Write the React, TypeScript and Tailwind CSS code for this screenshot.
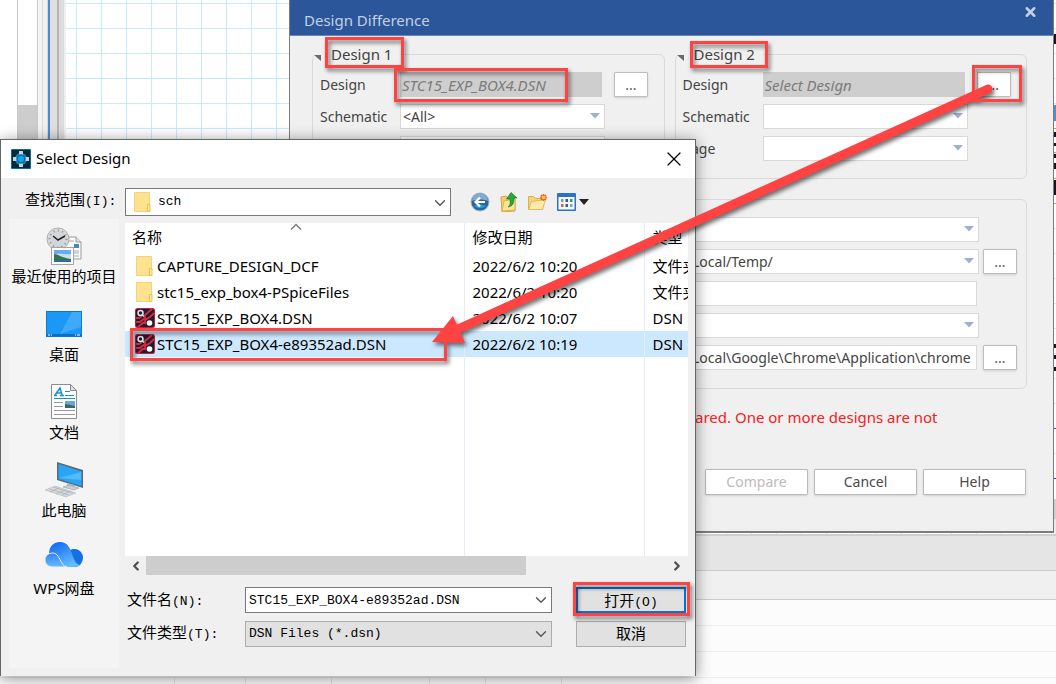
import { useState } from 'react';
import type { ReactNode } from 'react';
import clsx from 'clsx';
import { ChevronDown, ChevronLeft, ChevronRight, X } from 'lucide-react';

const UI_FONT = "font-['Noto_Sans','Noto_Sans_CJK_SC',sans-serif]";
const MONO_FONT = "font-['Liberation_Mono','Noto_Sans_CJK_SC',monospace]";

interface FileEntry {
  name: string;
  date: string;
  type: string;
  kind: 'folder' | 'design';
}

const FILES: FileEntry[] = [
  { name: 'CAPTURE_DESIGN_DCF', date: '2022/6/2 10:20', type: '文件夹', kind: 'folder' },
  { name: 'stc15_exp_box4-PSpiceFiles', date: '2022/6/2 10:20', type: '文件夹', kind: 'folder' },
  { name: 'STC15_EXP_BOX4.DSN', date: '2022/6/2 10:07', type: 'DSN', kind: 'design' },
  { name: 'STC15_EXP_BOX4-e89352ad.DSN', date: '2022/6/2 10:19', type: 'DSN', kind: 'design' },
];

/* ---------- icons ---------- */

const AppIcon = () => (
  <svg className="w-5 h-5" viewBox="0 0 20 20">
    <rect width="20" height="20" rx="1" fill="#0a6d94" />
    <rect x="1" y="1" width="18" height="18" fill="#04293b" />
    <circle cx="10" cy="10" r="6" fill="#0f8cc4" />
    <path d="M8 2h4v3.500H8zM8 14.500h4V18H8zM2 8h3.500v4H2zM14.500 8H18v4h-3.500z" fill="#c9d4da" />
    <circle cx="10" cy="10" r="4.500" fill="#0a6fa6" />
    <circle cx="10" cy="10" r="3" fill="#12a5e8" />
  </svg>
);

const FolderIcon = () => (
  <svg className="w-5 h-5" viewBox="0 0 20 20">
    <path d="M1.500.5h15v19h-15z" fill="#ffe28f" stroke="#f3d377" />
    <path d="M14.500 12.500h2.500v7h-2.500z" fill="#ffe9a8" stroke="#e9c04d" />
  </svg>
);

const DesignIcon = () => (
  <svg className="w-5 h-5" viewBox="0 0 20 20">
    <rect width="20" height="20" rx="2.500" fill="#c41f3a" />
    <rect x="1" y="1" width="18" height="18" rx="2" fill="#1c1f2e" />
    <path d="M1 14h4l5-4V7l7-6M3 19l5-4h2v-3l5-3 4-4M1 10h3l3-2" fill="none" stroke="#dc2742" strokeWidth="1.800" />
    <circle cx="5.500" cy="5" r="2.500" fill="#1c1f2e" stroke="#e4e6ea" strokeWidth="1.500" />
    <path d="M7 6.500l2 2" stroke="#e4e6ea" strokeWidth="1.200" />
    <circle cx="14.500" cy="15" r="2.800" fill="#fff" />
  </svg>
);

const RecentIcon = () => (
  <svg className="w-9 h-[38px]" viewBox="0 0 36 38">
    <path d="M18 10h12l5 5v17H18z" fill="#fbfbfb" stroke="#9a9a9a" />
    <path d="M30 10v5h5" fill="#e5e5e5" stroke="#9a9a9a" />
    <path d="M21 14h7M21 21h6M28 26h5M28 29h5M28 24h5" stroke="#a9a9a9" />
    <path d="M28 17h5v4h-5z" fill="#4389b5" />
    <circle cx="12" cy="12" r="11" fill="#d7d9da" stroke="#aeb1b3" />
    <circle cx="12" cy="12" r="8.500" fill="#d3d6d8" stroke="#8b8e90" strokeDasharray="1 3.400" strokeWidth="2" />
    <path d="M7 9l5 4 7-4" fill="none" stroke="#222" strokeWidth="1.500" />
    <rect x="5.500" y="20.500" width="22" height="17" fill="#fff" stroke="#a5a5a5" />
    <rect x="8" y="23" width="17" height="12" fill="#6fa9ea" />
    <path d="M8 28c5-3 10 0 17-1v5H8z" fill="#c6dff3" />
    <path d="M8 27c4 0 8 4 17 5v3H8z" fill="#39734e" />
    <path d="M8 33h17v2H8z" fill="#2a6e9c" />
  </svg>
);

const DesktopIcon = () => (
  <svg className="w-9 h-[38px]" viewBox="0 0 36 38">
    <rect x=".5" y="6.500" width="35" height="25" fill="#1b98f5" stroke="#1077c9" />
    <path d="M35 7v15L14 29 26 7z" fill="#3faaf9" />
    <path d="M1 29h34v2H1z" fill="#0d6fc0" />
    <path d="M2 30h2M5 30h1M29 30h1M31 30h3" stroke="#fff" />
  </svg>
);

const DocumentsIcon = () => (
  <svg className="w-9 h-[38px]" viewBox="0 0 36 38">
    <path d="M5.500 1.500h19l6 6v28h-25z" fill="#fdfdfd" stroke="#8d8d8d" />
    <path d="M24.500 1.500v6h6z" fill="#dedede" stroke="#8d8d8d" />
    <path d="M9 12L14 5l2 7M11 10h5M8 12.500h3M14 12.500h4" fill="none" stroke="#1c8fd1" strokeWidth="1.500" />
    <path d="M19 8.500h5M19 12.500h9M8 15.500h21" stroke="#1c8fd1" />
    <path d="M8 19.500h9M8 23.500h9M8 27.500h21M8 31.500h21" stroke="#9b9b9b" />
    <path d="M19 18h10v7H19z" fill="#6aa6d8" />
    <path d="M19 21l10 2v2H19z" fill="#336a5c" />
  </svg>
);

const ComputerIcon = () => (
  <svg className="w-[38px] h-[38px]" viewBox="0 0 38 38">
    <path d="M12 1l26 8v18l-26-8z" fill="#5a6b78" />
    <path d="M13.500 3l23 7.500v14.500l-23-7z" fill="#27a5f6" />
    <path d="M36 11v8l-22-2z" fill="#55b9fa" />
    <path d="M22 22l7 2v3l-7-2z" fill="#b4bcc2" />
    <path d="M18 26l6-2 10 3-5 2z" fill="#c7cdd2" stroke="#98a1a8" strokeWidth=".6" />
    <path d="M0 29l10-4 21 7-10 4z" fill="#d5d9dc" stroke="#b3babf" strokeWidth=".6" />
    <path d="M4 28l20 6M8 26l20 6M5 31l9-4M11 33l9-4M17 34l9-4" stroke="#adb4b9" strokeWidth=".8" />
  </svg>
);

const CloudIcon = () => (
  <svg className="w-[38px] h-[38px]" viewBox="0 0 38 38">
    <defs>
      <linearGradient id="cloudMain" x1="0" y1="0" x2="0.600" y2="1">
        <stop offset="0" stopColor="#0b62f2" />
        <stop offset="1" stopColor="#63bdff" />
      </linearGradient>
      <linearGradient id="cloudLeft" x1="0" y1="0" x2="0" y2="1">
        <stop offset="0" stopColor="#2a83f8" />
        <stop offset="1" stopColor="#6cbcff" />
      </linearGradient>
    </defs>
    <path d="M24 12c4-4 13-2 14 6 0 6-4 10-8 10h-8z" fill="#1670e4" />
    <path d="M4 15C4 7 9 3 15 3c7 0 10 5 12 12 2 6 4 10 8 11-2 1-3 2-6 2H18L8 15z" fill="url(#cloudMain)" />
    <path d="M8 28c-5 0-8-3-8-7s3-7 8-7c7 0 7 13 14 14z" fill="url(#cloudLeft)" stroke="#e6f1ff" />
  </svg>
);

const BackIcon = () => (
  <svg className="w-5 h-5" viewBox="0 0 20 20">
    <circle cx="10" cy="10" r="9" fill="#2d6499" stroke="#9ab7cf" />
    <path d="M2 9a8 8 0 0 1 16 0c-5-2-11-2-16 0z" fill="#84a9ca" />
    <path d="M4 14a8 6 0 0 0 12 0c-4-2-8-2-12 0z" fill="#27a3d4" />
    <path d="M10 5.500L5.500 10l4.500 4.500M6 10h9" fill="none" stroke="#fff" strokeWidth="2.200" />
  </svg>
);

const UpIcon = () => (
  <svg className="w-5 h-5" viewBox="0 0 20 20">
    <path d="M2 5l5-1 2 2 7 1v12l-13 1z" fill="#f3cf6a" stroke="#d3a73c" />
    <path d="M5 9l11-2v11L3 19z" fill="#fbe39a" stroke="#ddb54e" />
    <path d="M9 15c3-2 2-5 2-8H7.500L12 .5 18 6h-3c0 5-1 8-6 9z" fill="#2da53a" stroke="#14802a" strokeWidth=".7" />
  </svg>
);

const NewFolderIcon = () => (
  <svg className="w-5 h-5" viewBox="0 0 20 20">
    <path d="M.5 4.500h5l2 2h7v11H.5z" fill="#f5d57a" stroke="#dcae44" />
    <path d="M3.500 9.500l14-2-3 10H.5z" fill="#fce9ae" stroke="#e3b954" />
    <path d="M15.500 2v7M12 5.500h7M13 3l5 5M18 3l-5 5" stroke="#ee5a24" strokeWidth="1.500" />
    <circle cx="15.500" cy="5.500" r="1.800" fill="#ffd24a" />
  </svg>
);

const ViewIcon = () => (
  <svg className="w-5 h-5" viewBox="0 0 20 20">
    <rect x="0" y="1" width="19" height="18" rx="1" fill="#2a72c8" />
    <rect x="1.500" y="5" width="16" height="12.500" fill="#f5f9ff" />
    <path d="M4 7h2.500v3H4zM13 12h2.500v3H13z" fill="#8898bd" />
    <path d="M8.500 7H11v3H8.500zM8.500 12H11v3H8.500z" fill="#2d5fa8" />
    <path d="M13 7h2.500v3H13z" fill="#33a04a" />
    <path d="M4 12h2.500v3H4z" fill="#d7603e" />
  </svg>
);

/* ---------- background application ---------- */

const CanvasEdge = () => (
  <svg className="ml-auto w-0.5 h-[534px]" viewBox="0 0 2 534">
    <path d="M0 34h2v10H0zM0 132h2v5H0zM0 143h2v3H0zM0 154h2v4H0zM0 163h2v6H0zM0 180h2v15H0zM0 344h2v4H0zM0 355h2v4H0zM0 367h2v4H0z" fill="#15151f" />
    <path d="M0 105h2v16H0z" fill="#3f95dd" />
    <path d="M0 128h2v1H0zM0 152h2v1H0zM0 178h2v1H0zM0 203h2v1H0z" fill="#c9a064" />
    <path d="M0 428h2v1H0zM0 478h2v1H0z" fill="#5a2be0" />
    <path d="M0 499h2v20H0z" fill="#cfcfcf" />
    <path d="M0 519h2v15H0z" fill="#e9e9e9" />
  </svg>
);

const Workspace = () => (
  <div className="flex flex-col min-h-screen bg-[#fcfcfc]">
    <div className="flex h-[534px]">
      <div className="w-[17px] bg-white" />
      <div className="flex flex-col w-[21px] border-x border-[#c9c9c9] bg-[#cdcdcd]">
        <div className="h-[105px] bg-white" />
      </div>
      <div className="w-1 bg-[#f4f4f4]" />
      <div className="w-1.5 border-x border-[#d8d8d8] bg-[#f1f1f1]" />
      <div className="w-0.5 bg-[#4b8ad0]" />
      <div className="w-[7px] bg-[#dedede]" />
      <div className="w-0.5 bg-[#b3b3b3]" />
      <div className="w-[7px] border-r-2 border-[#efefef] bg-[#dcdcdc]" />
      <div className="flex flex-1 bg-white bg-[linear-gradient(to_right,#c8eafe_1px,transparent_1px),linear-gradient(to_bottom,#c8eafe_1px,transparent_1px)] bg-size-[25px_25px] bg-position-[10px_3px]">
        <CanvasEdge />
      </div>
    </div>
    <div className="h-0.5 bg-[#cfcfcf]" />
    <div className="h-[35px] border-b border-[#cccccc] bg-[#e5e5e5]" />
    <div className="h-[29px] border-b border-[#cccccc] bg-[#f0f0f0]" />
    <div className="h-[26px] border-b border-[#eeeeee]" />
    <div className="h-[26px] border-b border-[#eeeeee]" />
    <div className="h-[26px] border-b border-[#eeeeee]" />
    <div className="flex flex-1 *:border-r *:border-[#e4e4e4]">
      <div className="w-[175px]" />
      <div className="w-[71px]" />
      <div className="w-[86px]" />
      <div className="w-[98px]" />
      <div className="w-14" />
      <div className="w-[76px]" />
    </div>
  </div>
);

/* ---------- Design Difference window ---------- */

const Caret = () => (
  <svg className="absolute right-1 top-2 w-3 h-2 pointer-events-none" viewBox="0 0 12 8">
    <path d="M1 1h10L6 6.500z" fill="#9cb1d3" />
  </svg>
);

const Combo = ({ label, value, className }: { label: string; value?: string; className?: string }) => (
  <div className={clsx('relative h-[25px]', className)}>
    <select
      aria-label={label}
      className="block w-full h-full appearance-none border border-[#d9d9d9] bg-white pl-0.5 text-sm text-[#444]"
    >
      <option>{value ?? ''}</option>
    </select>
    <Caret />
  </div>
);

const BrowseButton = ({ label }: { label: string }) => (
  <button
    type="button"
    aria-label={label}
    className="block w-[34px] h-[25px] rounded-[1px] border border-[#bdbdbd] bg-white text-sm leading-5 text-[#555] shadow-sm"
  >
    ...
  </button>
);

interface DesignGroupProps {
  title: string;
  design: string;
  schematic?: string;
}

const DesignGroup = ({ title, design, schematic }: DesignGroupProps) => (
  <fieldset className="flex-1 h-[135px] rounded-md border border-[#d9d9d9] pl-[7px]">
    <legend className="-ml-1.5 flex items-center pr-2 h-5 text-[15px] text-[#444]">
      <svg className="w-2 h-2 mt-2" viewBox="0 0 8 8">
        <path d="M0 1h7v6z" fill="#6a6a6a" />
      </svg>
      <span className="pl-[9px]">{title}</span>
    </legend>
    <div className="flex flex-col gap-[7px] pt-2 text-sm text-[#444]">
      <div className="flex items-center">
        <span className="w-20">Design</span>
        <input
          readOnly
          aria-label={`${title} file`}
          defaultValue={design}
          className="w-[202px] h-[25px] mr-3 bg-[#cecece] px-0.5 text-[15px] italic text-[#7b7b7b]"
        />
        <BrowseButton label={`Browse ${title}`} />
      </div>
      <div className="flex items-center">
        <span className="w-20">Schematic</span>
        <Combo className="w-[205px]" label={`${title} schematic`} value={schematic} />
      </div>
      <div className="flex items-center">
        <span className="w-20">Page</span>
        <Combo className="w-[205px]" label={`${title} page`} />
      </div>
    </div>
  </fieldset>
);

const DialogButton = ({ children, disabled }: { children: ReactNode; disabled?: boolean }) => (
  <button
    type="button"
    disabled={disabled}
    className="w-[103px] h-[26px] rounded-[1px] border border-[#bababa] bg-white text-sm text-[#4a4a4a] shadow-sm disabled:text-[#c0b9bb]"
  >
    {children}
  </button>
);

const DesignDifference = () => (
  <section
    className={clsx(
      'absolute left-[289px] right-0.5 top-0 flex flex-col h-[533px] border-x border-b-2 border-[#7c7c7c] bg-[#f0f0f0]',
      UI_FONT,
    )}
  >
    <header className="flex items-start h-9 border-b border-[#6288bd] bg-[#2b579a] pl-3.5 pr-[15px] text-[#c3cfe3]">
      <h1 className="flex-1 pt-2 text-[15px] leading-6">Design Difference</h1>
      <button type="button" aria-label="Close" className="mt-1">
        <X className="w-[15px] h-4" strokeWidth={4} />
      </button>
    </header>

    <div className="flex gap-2.5 pt-2 pl-[22px] pr-[26px]">
      <DesignGroup title="Design 1" design="STC15_EXP_BOX4.DSN" schematic="<All>" />
      <DesignGroup title="Design 2" design="Select Design" />
    </div>

    <div className="mt-5 ml-[22px] mr-[26px] h-[190px] rounded-md border border-[#d9d9d9]">
      <div className="ml-[376px] flex flex-col gap-[7px] pt-[17px] text-sm text-[#444]">
        <Combo className="mr-[47px]" label="Output type" />
        <div className="flex gap-1">
          <Combo className="flex-1" label="Output directory" value="Local/Temp/" />
          <div className="w-[43px] h-[25px]">
            <BrowseButton label="Browse output directory" />
          </div>
        </div>
        <input aria-label="Output name" className="h-[25px] mr-[49px] border border-[#d9d9d9] bg-white px-1" />
        <Combo className="mr-[47px]" label="Viewer" />
        <div className="flex gap-1.5">
          <input
            aria-label="Browser path"
            defaultValue="Local\Google\Chrome\Application\chrome"
            className="flex-1 min-w-0 h-[25px] border border-[#d9d9d9] bg-white pl-0.5"
          />
          <div className="w-[43px] h-[25px]">
            <BrowseButton label="Browse browser path" />
          </div>
        </div>
      </div>
    </div>

    <p className="mt-4 ml-[405px] text-[15px] leading-6 text-[#f52020]">ared. One or more designs are not</p>

    <div className="mt-auto mb-9 mr-[27px] flex justify-end gap-1.5">
      <DialogButton disabled>Compare</DialogButton>
      <DialogButton>Cancel</DialogButton>
      <DialogButton>Help</DialogButton>
    </div>
  </section>
);

/* ---------- Select Design window ---------- */

const PLACES = [
  { label: '最近使用的项目', icon: <RecentIcon /> },
  { label: '桌面', icon: <DesktopIcon /> },
  { label: '文档', icon: <DocumentsIcon /> },
  { label: '此电脑', icon: <ComputerIcon /> },
  { label: 'WPS网盘', icon: <CloudIcon /> },
];

const FieldLabel = ({ htmlFor, text, hotkey, className }: { htmlFor: string; text: string; hotkey: string; className?: string }) => (
  <label htmlFor={htmlFor} className={clsx('text-[15px] leading-5 whitespace-nowrap', MONO_FONT, className)}>
    {text}
    <span className="text-[13px]">({hotkey}):</span>
  </label>
);

const FileTable = () => {
  const [selected, setSelected] = useState(3);

  return (
    <div className="relative h-[333px] overflow-hidden bg-white">
      <svg className="absolute left-[165px] top-0 w-3 h-2" viewBox="0 0 12 8">
        <path d="M1 6.500L6 1.500l5 5" fill="none" stroke="#777" strokeWidth="1.300" />
      </svg>
      <table className="w-full table-fixed text-[15px] leading-5 whitespace-nowrap">
        <thead>
          <tr className="h-[30px] text-left">
            <th className="w-[339px] pl-[7px] pb-0.5 font-normal">名称</th>
            <th className="w-[180px] border-l border-[#e3eef8] pl-2 pb-0.5 font-normal">修改日期</th>
            <th className="border-l border-[#e3eef8] pl-2 pb-0.5 font-normal">类型</th>
          </tr>
        </thead>
        <tbody>
          {FILES.map((file, i) => (
            <tr
              key={file.name}
              onClick={() => setSelected(i)}
              className={clsx('h-[26px]', i === selected && 'bg-[#cce8ff]')}
            >
              <td className="pl-2.5">
                <span className="flex items-center gap-0.5">
                  {file.kind === 'folder' ? <FolderIcon /> : <DesignIcon />}
                  {file.name}
                </span>
              </td>
              <td className="border-l border-[#e3eef8] pl-2">{file.date}</td>
              <td className="overflow-hidden border-l border-[#e3eef8] pl-2">{file.type}</td>
            </tr>
          ))}
          <tr className="h-[200px]">
            <td />
            <td className="border-l border-[#e3eef8]" />
            <td className="border-l border-[#e3eef8]" />
          </tr>
        </tbody>
      </table>
    </div>
  );
};

const SelectDesign = () => (
  <section
    className={clsx(
      'absolute left-0 top-[139px] flex flex-col w-[696px] h-[537px] border border-b-0 border-[#666] bg-[#f0f0f0] text-black shadow-[0_2px_14px_rgba(0,0,0,0.45)]',
      UI_FONT,
    )}
  >
    <header className="flex items-center h-[38px] bg-white pl-2.5 pr-[9px]">
      <AppIcon />
      <h2 className="flex-1 pl-[5px] pb-0.5 text-[15px]">Select Design</h2>
      <button type="button" aria-label="Close">
        <X className="w-6 h-6" strokeWidth={1.2} />
      </button>
    </header>

    <div className="flex items-center pt-2.5 pl-6">
      <FieldLabel htmlFor="look-in" text="查找范围" hotkey="I" className="w-[100px]" />
      <div className="relative w-[326px] h-7">
        <select
          id="look-in"
          className={clsx('block w-full h-full appearance-none border border-[#7a7a7a] bg-white pl-8 text-[13px]', MONO_FONT)}
        >
          <option>sch</option>
        </select>
        <span className="absolute left-2 top-1 pointer-events-none">
          <FolderIcon />
        </span>
        <ChevronDown className="absolute right-0.5 top-1.5 w-[18px] h-[18px] pointer-events-none" stroke="#555" strokeWidth={1.8} />
      </div>
      <div className="flex items-center gap-[9px] pl-[19px]">
        <button type="button" aria-label="Back"><BackIcon /></button>
        <button type="button" aria-label="Up one level"><UpIcon /></button>
        <button type="button" aria-label="New folder"><NewFolderIcon /></button>
        <button type="button" aria-label="View menu" className="flex items-center gap-0.5">
          <ViewIcon />
          <svg className="w-2.5 h-1.5" viewBox="0 0 10 6">
            <path d="M0 0h10L5 6z" fill="#222" />
          </svg>
        </button>
      </div>
    </div>

    <div className="flex flex-1 gap-1.5 pt-[3px] pl-2 pr-[7px] pb-2">
      <nav className="w-[110px] bg-[#f4f4f4] pt-2">
        {PLACES.map((place) => (
          <button
            key={place.label}
            type="button"
            className="flex flex-col items-center w-full h-[78px] text-[15px] leading-[22px] whitespace-nowrap"
          >
            {place.icon}
            {place.label}
          </button>
        ))}
      </nav>

      <div className="flex-1 min-w-0 pt-1">
        <FileTable />
        <div className="flex items-center h-[19px] px-1">
          <ChevronLeft className="w-3.5 h-3.5" stroke="#505050" strokeWidth={4} />
          <div className="w-[380px] h-full ml-[3px] bg-[#cdcdcd]" />
          <ChevronRight className="ml-auto w-3.5 h-3.5" stroke="#505050" strokeWidth={4} />
        </div>

        <div className="grid grid-cols-[120px_307px_110px] gap-y-2 items-center pt-3">
          <FieldLabel htmlFor="file-name" text="文件名" hotkey="N" className="pl-0.5 pt-1" />
          <div className="relative h-[26px]">
            <input
              id="file-name"
              defaultValue="STC15_EXP_BOX4-e89352ad.DSN"
              className={clsx('block w-full h-full border border-[#7a7a7a] bg-white pl-[3px] text-[13px]', MONO_FONT)}
            />
            <ChevronDown className="absolute right-0.5 top-1 w-[18px] h-[18px] pointer-events-none" stroke="#555" strokeWidth={1.8} />
          </div>
          <button
            type="button"
            className={clsx('ml-6 w-[110px] h-[26px] border-2 border-[#0078d7] bg-[#e1e1e1] pt-1 text-[15px] leading-5', MONO_FONT)}
          >
            打开<span className="text-[13px]">(O)</span>
          </button>

          <FieldLabel htmlFor="file-type" text="文件类型" hotkey="T" className="pl-0.5 pt-0.5" />
          <div className="relative h-[26px]">
            <select
              id="file-type"
              className={clsx('block w-full h-full appearance-none border border-[#adadad] bg-[#e1e1e1] pl-[3px] text-[13px]', MONO_FONT)}
            >
              <option>DSN Files (*.dsn)</option>
            </select>
            <ChevronDown className="absolute right-0.5 top-1 w-[18px] h-[18px] pointer-events-none" stroke="#555" strokeWidth={1.8} />
          </div>
          <button
            type="button"
            className={clsx('ml-6 w-[110px] h-[26px] border border-[#adadad] bg-[#e1e1e1] pt-1 text-[15px] leading-5', MONO_FONT)}
          >
            取消
          </button>
        </div>
      </div>
    </div>
  </section>
);

/* ---------- red markers and arrow drawn over both windows ---------- */

const MARKERS = [
  { x: 325, y: 37, w: 79, h: 31 },
  { x: 394, y: 68, w: 174, h: 34 },
  { x: 690, y: 41, w: 78, h: 27 },
  { x: 972, y: 65, w: 50, h: 37 },
  { x: 130, y: 328, w: 317, h: 33 },
  { x: 573, y: 582, w: 117, h: 34 },
];

const Annotations = () => (
  <svg
    className="absolute left-0 top-0 w-[1056px] h-[684px] pointer-events-none drop-shadow-[2px_3px_2px_rgba(0,0,0,0.55)]"
    viewBox="0 0 1056 684"
  >
    {MARKERS.map((m) => (
      <rect
        key={`${m.x}-${m.y}`}
        x={m.x + 1.5}
        y={m.y + 1.5}
        width={m.w - 3}
        height={m.h - 3}
        fill="none"
        stroke="#ff4343"
        strokeWidth="3"
      />
    ))}
    <path d="M988 89L458 329" stroke="#ff4343" strokeWidth="9" strokeLinecap="round" />
    <path d="M453 316L432 342l33 1z" fill="#ff4343" />
  </svg>
);

export default function App() {
  return (
    <main className="relative overflow-hidden">
      <Workspace />
      <DesignDifference />
      <SelectDesign />
      <Annotations />
    </main>
  );
}
